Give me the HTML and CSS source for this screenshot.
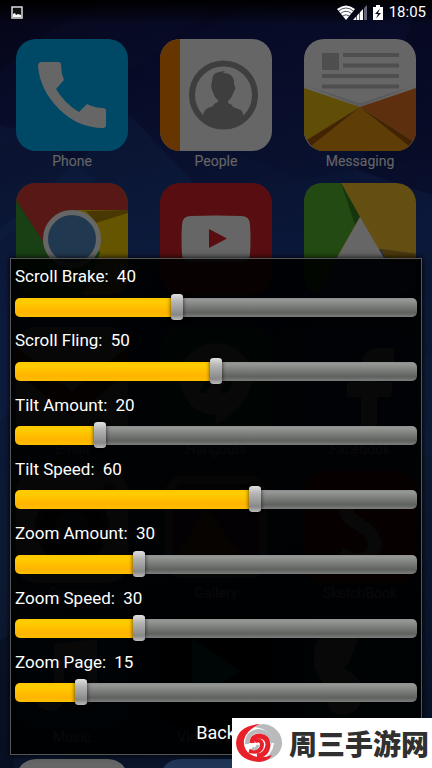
FILE: index.html
```
<!DOCTYPE html>
<html lang="en">
<head>
    <meta charset="UTF-8">
    <meta name="viewport" content="width=device-width, initial-scale=1.0">
    <title>Launcher scroll settings</title>
    <link rel="stylesheet" href="styles.css">
</head>
<body>
    <!-- Home screen -->
    <main class="launcher">
        <svg class="wallpaper" viewBox="0 0 432 768" preserveAspectRatio="none" aria-hidden="true">
            <path d="M0 72 55 28 110 0H220L144 62 0 150Z" fill="#1c3080" opacity=".2"/>
            <path d="M0 230 130 115 200 190 140 300 0 420Z" fill="#2c68c0" opacity=".25"/>
            <path d="M144 62 190 130 300 180 432 158V90L260 0Z" fill="#14206a" opacity=".3"/>
            <path d="M358 170 432 195V0H420Z" fill="#0a0a40" opacity=".4"/>
            <path d="M0 125 40 135 95 180 0 240Z" fill="#2c60b4" opacity=".25"/>
            <path d="M410 360 432 358V456L410 458Z" fill="#2a50a0" opacity=".3"/>
            <path d="M0 640 14 632V768H0Z" fill="#0a1440" opacity=".4"/>
        </svg>
        <div class="app">
            <svg viewBox="0 0 112 112">
                <rect width="112" height="112" rx="20" fill="#00b6ff"/>
                <path d="M26 23h16q3 0 3 3q0 8 3 15l-8 9q9 15 23 23l8-8q8 4 16 4q3 0 3 3v14q0 3-3 3q-25 0-44-19T22 27q0-4 4-4Z" fill="#fff"/>
            </svg>
            <span>Phone</span>
        </div>
        <div class="app">
            <svg viewBox="0 0 112 112">
                <rect width="112" height="112" rx="20" fill="#fff"/>
                <path d="M20 0A20 20 0 0 0 0 20V92A20 20 0 0 0 20 112Z" fill="#ff8500"/>
                <circle cx="63.500" cy="56" r="31.500" fill="none" stroke="#9a9a9a" stroke-width="6"/>
                <path d="M52 42q0-8 7-9l6-1-2 2q12 0 11 12l1 1q1 4-1 5-2 7-6 10v2q4 1 5 4l8 3q3 3 2 8-8 9-20 9t-20-9q0-6 3-9l7-3q1-3 5-4v-2q-4-3-5-8-3-5-1-10Z" fill="#9a9a9a"/>
            </svg>
            <span>People</span>
        </div>
        <div class="app">
            <svg viewBox="0 0 112 112">
                <rect width="112" height="112" rx="20" fill="#fff"/>
                <path d="M18 14h17v17H18ZM39 14h56v4H39ZM39 24.500h56v4H39ZM18 35h77v4H18ZM18 45.500h77v4H18Z" fill="#c4c4c4"/>
                <path d="M0 46 56 64 112 46 56 68Z" fill="#e4e4e4"/>
                <path d="M0 49 56 68 3 102Q0 98 0 92Z" fill="#f0c010"/>
                <path d="M112 49 56 68 109 102Q112 98 112 92Z" fill="#e87524"/>
                <path d="M56 68 3 101Q9 112 20 112H92Q103 112 109 102Z" fill="#a55a08"/>
                <path d="M56 68 7 107Q13 112 20 112H92Q100 112 105 107Z" fill="#ee9810"/>
            </svg>
            <span>Messaging</span>
        </div>
        <div class="app">
            <svg viewBox="0 0 112 112">
                <rect width="112" height="112" rx="20" fill="#3ca032"/>
                <path d="M0 17Q4 0 20 0H92Q112 0 112 27H56L28 60Z" fill="#da3c36"/>
                <path d="M60 27H112V92Q112 112 92 112H66L84 70Z" fill="#ffd500"/>
                <path d="M70 28 112 27V30L80 40Z" fill="#b78c06"/>
                <circle cx="56" cy="56" r="26.500" fill="#528fc8" stroke="#fff" stroke-width="5"/>
                <text class="badge-text" x="79" y="93">BETA</text>
            </svg>
            <span>Chrome</span>
        </div>
        <div class="app">
            <svg viewBox="0 0 112 112">
                <rect width="112" height="112" rx="20" fill="#dc2328"/>
                <path d="M31 33Q56 32 81 33Q90 33 90 42Q91 56 90 71Q90 79 81 79Q56 80 31 79Q22 79 22 71Q21 56 22 42Q22 33 31 33Z" fill="#fff"/>
                <path d="M49 46 67 55.500 49 65Z" fill="#dc2328"/>
            </svg>
            <span>YouTube</span>
        </div>
        <div class="app">
            <svg viewBox="0 0 112 112">
                <rect width="112" height="112" rx="20" fill="#fbc52e"/>
                <path d="M20 0H37L56 34 12 110Q0 105 0 92V20Q0 0 20 0Z" fill="#58b82e"/>
                <path d="M37 0 56 34 51 42Z" fill="#388520"/>
                <path d="M76 66 112 71V92Q112 112 92 112H20L12 110 33 74Z" fill="#3878c0"/>
                <path d="M76 66 112 71V78H83Z" fill="#bd8e1b"/>
                <path d="M56 34 80 75H33Z" fill="#fff"/>
            </svg>
            <span>Drive</span>
        </div>
        <div class="app">
            <svg viewBox="0 0 112 112">
                <rect width="112" height="112" rx="20" fill="#eee"/>
                <path d="M0 20 56 64 112 20V46L56 90 0 46Z" fill="#c83030"/>
            </svg>
            <span>Email</span>
        </div>
        <div class="app">
            <svg viewBox="0 0 112 112">
                <rect width="112" height="112" rx="20" fill="#108840"/>
                <path d="M56 16A36 36 0 0 1 92 52Q90 78 56 97V88A36 36 0 0 1 56 16Z" fill="#fff"/>
                <path d="M39 42h13v13l-6 11h-7l5-11h-5ZM60 42h13v13l-6 11h-7l5-11h-5Z" fill="#108840"/>
            </svg>
            <span>Hangouts</span>
        </div>
        <div class="app">
            <svg viewBox="0 0 112 112">
                <rect width="112" height="112" rx="20" fill="#1858a0"/>
                <path d="M90 21V36H80Q73 36 73 44V55H89L87 70H73V112H57V70H43V55H57V42Q57 21 78 21Z" fill="#fff"/>
            </svg>
            <span>Facebook</span>
        </div>
        <div class="app">
            <svg viewBox="0 0 112 112">
                <rect width="112" height="112" rx="20" fill="#d8d8d8"/>
                <circle cx="56" cy="56" r="34" fill="#203048" stroke="#555" stroke-width="6"/>
                <circle cx="56" cy="56" r="16" fill="#3868a8"/>
                <circle cx="93" cy="18" r="6" fill="#888"/>
            </svg>
            <span>Camera</span>
        </div>
        <div class="app">
            <svg viewBox="0 0 112 112">
                <rect x="9" y="9" width="94" height="94" rx="14" fill="#602060" stroke="#bbb" stroke-width="8"/>
                <path d="M13 90 46 36 90 99H13Z" fill="#c86020"/>
            </svg>
            <span>Gallery</span>
        </div>
        <div class="app">
            <svg viewBox="0 0 112 112">
                <rect width="112" height="112" rx="20" fill="#c83c10"/>
                <path d="M76 31Q62 22 48 31Q36 42 50 50L64 60Q78 74 64 86Q52 94 36 82" fill="none" stroke="#fff" stroke-width="13"/>
            </svg>
            <span>SketchBook</span>
        </div>
        <div class="app">
            <svg viewBox="0 0 112 112">
                <rect width="112" height="112" rx="20" fill="#1070a8"/>
                <path d="M38 29 81 24V77A14 12 0 1 1 72 67V42L48 46V83A14 12 0 1 1 38 72Z" fill="#fff"/>
            </svg>
            <span>Music</span>
        </div>
        <div class="app">
            <svg viewBox="0 0 112 112">
                <rect width="112" height="112" rx="20" fill="#181c20"/>
                <path d="M32 23 81 56 32 88Z" fill="#109cc0"/>
            </svg>
            <span>Video Player</span>
        </div>
        <div class="app">
            <svg viewBox="0 0 112 112">
                <rect width="112" height="112" rx="20" fill="#106870"/>
                <path d="M56 20Q44 8 28 14Q8 22 10 46Q11 62 24 72Q18 98 38 100Q60 98 58 74Q56 62 44 56L34 46 46 32Q30 24 24 40L22 44Q22 58 44 50Z" fill="#fff"/>
            </svg>
        </div>
        <div class="app">
            <svg viewBox="0 0 112 112"><rect width="112" height="112" rx="20" fill="#fff"/></svg>
        </div>
        <div class="app">
            <svg viewBox="0 0 112 112"><rect width="112" height="112" rx="20" fill="#5087d8"/></svg>
        </div>
    </main>

    <div class="dim"></div>

    <header class="status">
        <svg width="12" height="13" viewBox="0 0 12 13" aria-hidden="true">
            <rect x="1" y="1" width="10" height="11" fill="#111" stroke="#ddd" stroke-width="1.500"/>
            <path d="M2 8 4 7 5 9 7 8 10 9V11H2Z" fill="#fff"/>
        </svg>
        <div class="status-right">
            <svg width="18" height="15" viewBox="0 0 18 15" aria-hidden="true">
                <path d="M0 4Q9-3 18 4L9 15Z" fill="#fff"/>
                <path d="M1.500 6Q9 0 16.500 6M3.500 8.500Q9 4 14.500 8.500M5.500 11Q9 8.500 12.500 11" fill="none" stroke="#080818" stroke-width=".7"/>
            </svg>
            <svg class="signal" width="14" height="15" viewBox="0 0 14 15" aria-hidden="true">
                <path d="M0 15 10 4V15Z" fill="#fff"/>
                <path d="M11 3 14 0V15H11Z" fill="#65657a"/>
                <path d="M3.500 8V15M6.500 6V15M10.500 1V15" stroke="#080818" stroke-width=".6"/>
            </svg>
            <svg class="battery" width="10" height="15" viewBox="0 0 10 15" aria-hidden="true">
                <path d="M3 0H7V2H10V15H0V2H3Z" fill="#fff"/>
                <path d="M7 3.500 2 9H5L3 13.500 8 8H5Z" fill="#080818"/>
            </svg>
            <time>18:05</time>
        </div>
    </header>

    <!-- Settings dialog -->
    <form class="dialog">
        <div class="rows">
            <div class="row">
                <label for="scrollBrake">Scroll Brake: <output>40</output></label>
                <input type="range" id="scrollBrake" min="0" max="100" value="40" style="--value: 40">
            </div>
            <div class="row">
                <label for="scrollFling">Scroll Fling: <output>50</output></label>
                <input type="range" id="scrollFling" min="0" max="100" value="50" style="--value: 50">
            </div>
            <div class="row">
                <label for="tiltAmount">Tilt Amount: <output>20</output></label>
                <input type="range" id="tiltAmount" min="0" max="100" value="20" style="--value: 20">
            </div>
            <div class="row">
                <label for="tiltSpeed">Tilt Speed: <output>60</output></label>
                <input type="range" id="tiltSpeed" min="0" max="100" value="60" style="--value: 60">
            </div>
            <div class="row">
                <label for="zoomAmount">Zoom Amount: <output>30</output></label>
                <input type="range" id="zoomAmount" min="0" max="100" value="30" style="--value: 30">
            </div>
            <div class="row">
                <label for="zoomSpeed">Zoom Speed: <output>30</output></label>
                <input type="range" id="zoomSpeed" min="0" max="100" value="30" style="--value: 30">
            </div>
            <div class="row">
                <label for="zoomPage">Zoom Page: <output>15</output></label>
                <input type="range" id="zoomPage" min="0" max="100" value="15" style="--value: 15">
            </div>
        </div>
        <button type="button">Back</button>
    </form>

    <!-- Site mark -->
    <div class="site-mark">
        <svg width="48" height="40" viewBox="0 0 48 40" aria-hidden="true">
            <path d="M19 4Q28-2 38 4Q48 11 47 22Q45 36 24 39Q38 32 39 20Q37 6 19 4Z" fill="#b8babc"/>
            <path d="M25 1Q2 3 1 20Q2 37 24 39Q34 38 37 32Q24 37 15 31Q8 26 9 17Q11 7 25 1Z" fill="#e8202a"/>
            <path d="M12 21Q12 9 24 8Q35 9 38 20" fill="none" stroke="#b8babc" stroke-width="4"/>
            <path d="M14 28Q27 31 27 21Q26 16 20 18" fill="none" stroke="#e8202a" stroke-width="4"/>
            <path d="M17 20Q17 13 25 13Q33 14 33 22Q32 32 22 33" fill="none" stroke="#e8202a" stroke-width="5"/>
            <path d="M17 25Q21 28 23 22" fill="none" stroke="#b8babc" stroke-width="3"/>
        </svg>
        <span lang="zh-CN">周三手游网</span>
    </div>

    <script>
        // Keeps the filled part and the number in step with the thumb
        document.querySelectorAll('input[type="range"]').forEach(slider => {
            slider.addEventListener('input', () => {
                slider.style.setProperty('--value', slider.value);
                slider.previousElementSibling.querySelector('output').value = slider.value;
            });
        });
    </script>
</body>
</html>
```
FILE: styles.css
```
* {
    box-sizing: border-box;
}

body {
    position: relative;
    margin: 0;
    height: 100vh;
    overflow: hidden;
    background: #000;
    color: #fff;
    font-family: Roboto, "Noto Sans CJK SC", sans-serif;
}

/* Home screen */
.launcher {
    position: relative;
    display: grid;
    grid-template-columns: repeat(3, 1fr);
    grid-auto-rows: 144px;
    height: 100%;
    padding-top: 39px;
    overflow: hidden;
    background: linear-gradient(165deg, #0c0c38 0%, #12195c 12%, #1c3c90 38%, #20417f 65%, #142c60 100%);
}

.wallpaper {
    position: absolute;
    width: 100%;
    height: 100%;
}

.app {
    position: relative;
    display: flex;
    flex-direction: column;
    align-items: center;
    font-size: 14px;
    line-height: 20px;
}

.app svg {
    width: 112px;
    height: 112px;
    flex: none;
}

.badge-text {
    font-size: 14px;
    font-weight: bold;
    fill: #fff;
}

.dim {
    position: absolute;
    inset: 0;
    background: linear-gradient(#000 0, rgba(0, 0, 0, 0.6) 24px);
}

/* Status bar */
.status {
    position: absolute;
    top: 0;
    left: 0;
    right: 0;
    display: flex;
    justify-content: space-between;
    align-items: center;
    height: 24px;
    padding: 0 6px 0 11px;
}

.status-right {
    display: flex;
    align-items: center;
    font-size: 15px;
}

.signal {
    margin-left: -2px;
}

.battery {
    margin: 0 6px;
}

/* Dialog */
.dialog {
    position: absolute;
    top: 258px;
    bottom: 13px;
    left: 10px;
    right: 10px;
    display: flex;
    flex-direction: column;
    padding: 4px;
    border: 1px solid #555;
    background: rgba(0, 0, 0, 0.92);
    box-shadow: 0 0 6px #000;
}

.rows {
    flex: 1;
    display: flex;
    flex-direction: column;
    justify-content: space-between;
}

.row {
    display: flex;
    flex-direction: column;
    gap: 5px;
}

.row label {
    font-size: 17px;
    line-height: 26px;
}

.row output {
    margin-left: 4px;
}

input[type="range"] {
    -webkit-appearance: none;
    appearance: none;
    width: 100%;
    height: 26px;
    margin: 0;
    background: transparent;
}

input[type="range"]::-webkit-slider-runnable-track {
    --fill: calc(8px + (100% - 16px) * var(--value) / 100);
    height: 19px;
    border-radius: 5px;
    background:
        linear-gradient(#ffc800, #ffcc00 20%, #ffb400 75%, #ffbf00) left / var(--fill) 100% no-repeat,
        linear-gradient(#8e908e, #969896 10%, #5e615d 78%, #7c7e7b);
}

/* The side borders stay clear, the knob itself is 12px wide */
input[type="range"]::-webkit-slider-thumb {
    -webkit-appearance: none;
    appearance: none;
    width: 16px;
    height: 26px;
    margin-top: -4px;
    border: 0 solid transparent;
    border-width: 0 2px;
    border-radius: 5px / 3px;
    background: linear-gradient(#e0e0e0, #b4b4b4 30%, #888 80%, #bbb) padding-box;
    filter: drop-shadow(0 0 2px rgba(0, 0, 0, 0.7));
}

.dialog button {
    padding: 10px 0 0;
    border: 0;
    background: none;
    color: #fff;
    font: 18px/34px Roboto, sans-serif;
}

/* Site mark */
.site-mark {
    position: absolute;
    right: 0;
    bottom: 0;
    display: flex;
    align-items: center;
    justify-content: space-between;
    width: 200px;
    height: 50px;
    padding: 0 3px;
    background: #fff;
    color: #303030;
    font-family: "Noto Sans CJK SC", sans-serif;
    font-size: 28px;
    font-weight: 900;
}
```
